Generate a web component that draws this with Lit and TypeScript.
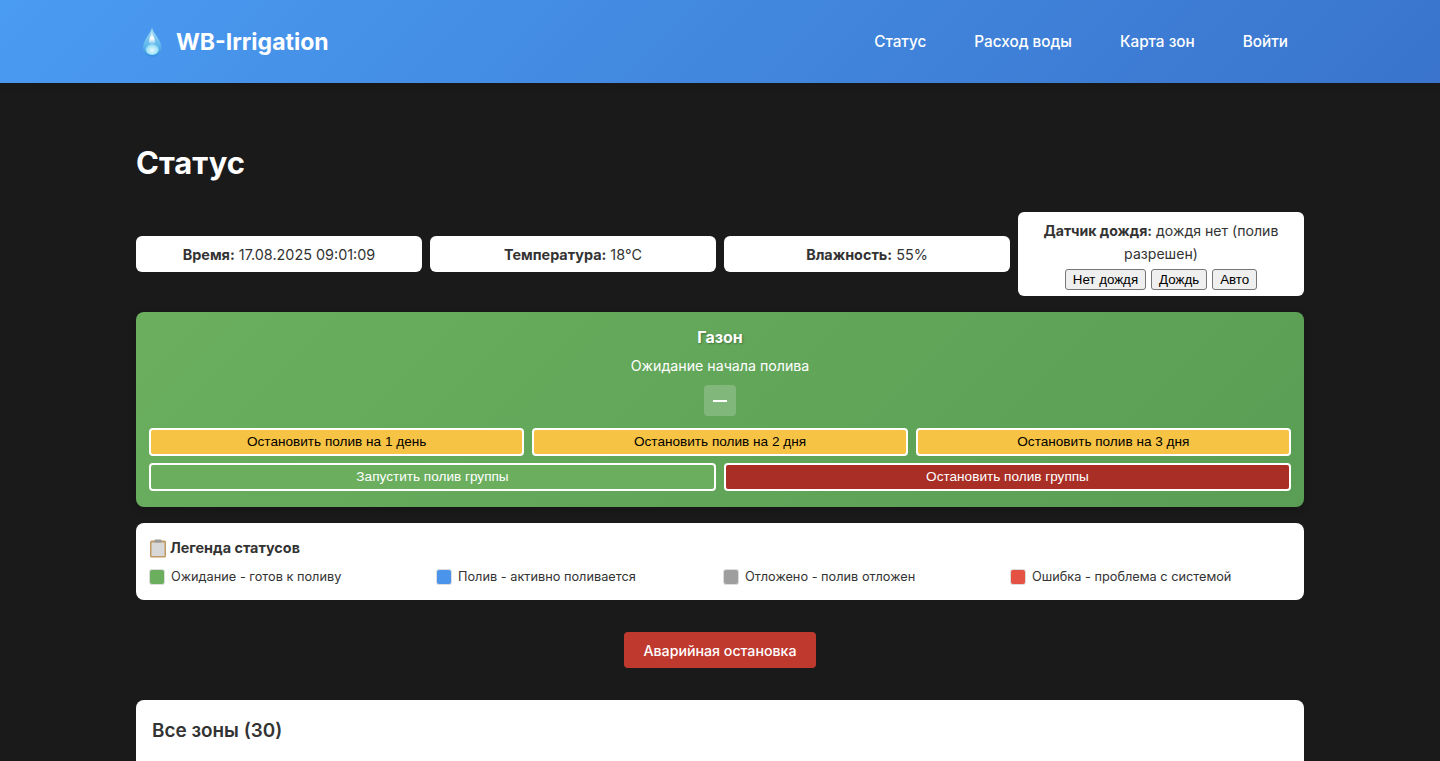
import { LitElement, css, html } from "lit";
import { customElement } from "lit/decorators.js";

const NAV_LINKS = ["Статус", "Расход воды", "Карта зон", "Войти"];
const POSTPONE = [
  "Остановить полив на 1 день",
  "Остановить полив на 2 дня",
  "Остановить полив на 3 дня",
];
const LEGEND = [
  { color: "#6aae5e", label: "Ожидание - готов к поливу" },
  { color: "#4a94ec", label: "Полив - активно поливается" },
  { color: "#9e9e9e", label: "Отложено - полив отложен" },
  { color: "#e55243", label: "Ошибка - проблема с системой" },
];

@customElement("app-root")
export class AppRoot extends LitElement {
  static styles = css`
    :host {
      display: block;
      height: 761px;
      overflow: hidden;
      background: #1a1a1a;
      font-family: Inter, "Liberation Sans", sans-serif;
      color: #333;
    }
    header {
      height: 83px;
      background: linear-gradient(135deg, #4a9bf2 0%, #3a74cc 100%);
      box-shadow: 0 2px 10px rgba(0, 0, 0, 0.1);
    }
    .header-inner {
      width: 1168px;
      height: 83px;
      margin: 0 auto;
      display: flex;
      align-items: center;
      justify-content: space-between;
    }
    .logo {
      display: flex;
      align-items: center;
      gap: 10px;
      color: #fff;
      font-size: 23px;
      font-weight: 700;
    }
    .logo svg {
      display: block;
      width: 30px;
      height: 30px;
    }
    nav {
      display: flex;
      gap: 48px;
      padding-right: 16px;
      padding-bottom: 1px;
    }
    nav a {
      color: #fff;
      font-size: 15.3px;
      font-weight: 500;
    }
    main {
      width: 1168px;
      margin: 0 auto;
      padding-top: 60px;
    }
    h1 {
      margin: 0 0 30px;
      color: #fff;
      font-size: 31px;
      line-height: 39px;
      font-weight: 700;
    }
    .stats {
      display: grid;
      grid-template-columns: repeat(4, 1fr);
      gap: 8px;
      align-items: center;
      margin-bottom: 16px;
    }
    .stat {
      background: #fff;
      border-radius: 6px;
      padding: 9px 8px 7px;
      font-size: 14.4px;
      line-height: 20px;
      text-align: center;
    }
    .rain {
      height: 84px;
      box-sizing: border-box;
      padding: 7px 8px 6px;
      font-size: 14.1px;
      line-height: 23px;
    }
    .rain-buttons {
      display: flex;
      justify-content: center;
      gap: 5px;
      margin-top: 4px;
    }
    .rain-buttons button {
      height: 21px;
      padding: 0 7px;
      background: #efefef;
      border: 1px solid #767676;
      border-radius: 3px;
      color: #000;
      font-family: "Liberation Sans", sans-serif;
      font-size: 13.33px;
    }
    .group {
      background: linear-gradient(135deg, #6aae5e 0%, #5a9e55 100%);
      border-radius: 8px;
      padding: 13px;
      height: 195px;
      box-sizing: border-box;
      box-shadow: 0 2px 8px rgba(0, 0, 0, 0.2);
      text-align: center;
      color: #fff;
      margin-bottom: 16px;
    }
    .group-name {
      font-size: 16px;
      line-height: 24px;
      font-weight: 700;
      text-shadow: 1px 1px 2px rgba(0, 0, 0, 0.3);
    }
    .group-status {
      margin-top: 5px;
      font-size: 14.2px;
      line-height: 24px;
    }
    .timer {
      width: 32px;
      height: 31px;
      margin: 7px auto 12px;
      border-radius: 4px;
      background: rgba(255, 255, 255, 0.2);
      display: flex;
      align-items: center;
      justify-content: center;
    }
    .timer span {
      width: 14px;
      height: 2px;
      background: #fff;
    }
    .actions {
      display: grid;
      gap: 8px;
      margin-bottom: 7px;
    }
    .actions.three {
      grid-template-columns: repeat(3, 1fr);
    }
    .actions.two {
      grid-template-columns: repeat(2, 1fr);
    }
    .actions button {
      height: 28px;
      border: 2px solid #fff;
      border-radius: 4px;
      font-family: "Liberation Sans", sans-serif;
      font-size: 13.6px;
      padding: 0 0 1px;
    }
    .postpone {
      background: #f6c344;
      color: #000;
    }
    .start {
      background: #6aae5e;
      color: #fff;
    }
    .stop {
      background: #a92e25;
      color: #fff;
    }
    .legend {
      background: #fff;
      border-radius: 8px;
      height: 77px;
      box-sizing: border-box;
      padding: 14px 13px 0;
      margin-bottom: 32px;
    }
    .legend-title {
      display: flex;
      align-items: center;
      gap: 2px;
      font-size: 14.4px;
      line-height: 22px;
      font-weight: 700;
    }
    .legend-title svg {
      display: block;
      width: 19px;
      height: 19px;
    }
    .legend-items {
      display: grid;
      grid-template-columns: repeat(4, 1fr);
      gap: 6px;
      margin-top: 9px;
    }
    .legend-item {
      display: flex;
      align-items: center;
      gap: 6px;
      font-size: 12.75px;
      line-height: 16px;
    }
    .legend-item .label {
      padding-top: 1px;
    }
    .swatch {
      width: 16px;
      height: 16px;
      border-radius: 3px;
      box-sizing: border-box;
      border: 1px solid #ddd;
    }
    .emergency {
      display: flex;
      justify-content: center;
      margin-bottom: 32px;
    }
    .emergency button {
      width: 192px;
      height: 36px;
      border: 0;
      border-radius: 4px;
      background: #c0392f;
      color: #fff;
      font-family: Inter, "Liberation Sans", sans-serif;
      font-size: 14.2px;
      font-weight: 500;
    }
    .zones {
      background: #fff;
      border-radius: 8px 8px 0 0;
      padding: 16px;
      height: 120px;
    }
    .zones h2 {
      margin: 0;
      font-size: 18.9px;
      line-height: 30px;
      font-weight: 600;
    }
  `;

  render() {
    return html`
      <header>
        <div class="header-inner">
          <div class="logo">
            <svg viewBox="0 0 30 30">
              <defs>
                <linearGradient id="drop" x1="0" y1="0" x2="0" y2="1">
                  <stop offset="0" stop-color="#a8dcf6" />
                  <stop offset="0.6" stop-color="#5fb8ec" />
                  <stop offset="1" stop-color="#2f8edc" />
                </linearGradient>
                <radialGradient id="glow" cx="0.5" cy="0.6" r="0.55">
                  <stop offset="0" stop-color="#e6f9ff" />
                  <stop offset="0.7" stop-color="#9fe2f8" />
                  <stop offset="1" stop-color="#9fe2f8" stop-opacity="0" />
                </radialGradient>
                <linearGradient id="glint" x1="0" y1="0" x2="0" y2="1">
                  <stop offset="0" stop-color="#fff" stop-opacity="0.2" />
                  <stop offset="0.55" stop-color="#fff" />
                  <stop offset="1" stop-color="#fff" stop-opacity="0.1" />
                </linearGradient>
              </defs>
              <path
                d="M16 0.5 C17 6 25.5 13 25.5 20.5 A9 9 0 0 1 7 20.5 C7 13 15 6 16 0.5 Z"
                fill="url(#drop)"
              />
              <ellipse cx="16.2" cy="22" rx="7" ry="6" fill="url(#glow)" />
              <path
                d="M15.8 4 C16.5 8 19 11 19 15 C19 18 13 18 13 15 C13 11 15.2 8 15.8 4 Z"
                fill="url(#glint)"
              />
            </svg>
            WB-Irrigation
          </div>
          <nav>${NAV_LINKS.map((link) => html`<a>${link}</a>`)}</nav>
        </div>
      </header>
      <main>
        <h1>Статус</h1>
        <div class="stats">
          <div class="stat"><b>Время:</b> 17.08.2025 09:01:09</div>
          <div class="stat"><b>Температура:</b> 18°C</div>
          <div class="stat"><b>Влажность:</b> 55%</div>
          <div class="stat rain">
            <b>Датчик дождя:</b> дождя нет (полив разрешен)
            <div class="rain-buttons">
              <button>Нет дождя</button>
              <button>Дождь</button>
              <button>Авто</button>
            </div>
          </div>
        </div>
        <section class="group">
          <div class="group-name">Газон</div>
          <div class="group-status">Ожидание начала полива</div>
          <div class="timer"><span></span></div>
          <div class="actions three">
            ${POSTPONE.map((t) => html`<button class="postpone">${t}</button>`)}
          </div>
          <div class="actions two">
            <button class="start">Запустить полив группы</button>
            <button class="stop">Остановить полив группы</button>
          </div>
        </section>
        <section class="legend">
          <div class="legend-title">
            <svg viewBox="0 0 19 19">
              <rect x="1" y="1.5" width="16" height="17" rx="1.5" fill="#c09a63" />
              <rect x="2.5" y="3.5" width="13" height="13.5" fill="#d8d8d8" />
              <rect x="5.5" y="0.5" width="7" height="3" rx="1" fill="#9a9a9a" />
            </svg>
            Легенда статусов
          </div>
          <div class="legend-items">
            ${LEGEND.map(
              (item) => html`
                <div class="legend-item">
                  <span class="swatch" style=${`background:${item.color}`}></span>
                  <span class="label">${item.label}</span>
                </div>
              `,
            )}
          </div>
        </section>
        <div class="emergency"><button>Аварийная остановка</button></div>
        <section class="zones"><h2>Все зоны (30)</h2></section>
      </main>
    `;
  }
}
